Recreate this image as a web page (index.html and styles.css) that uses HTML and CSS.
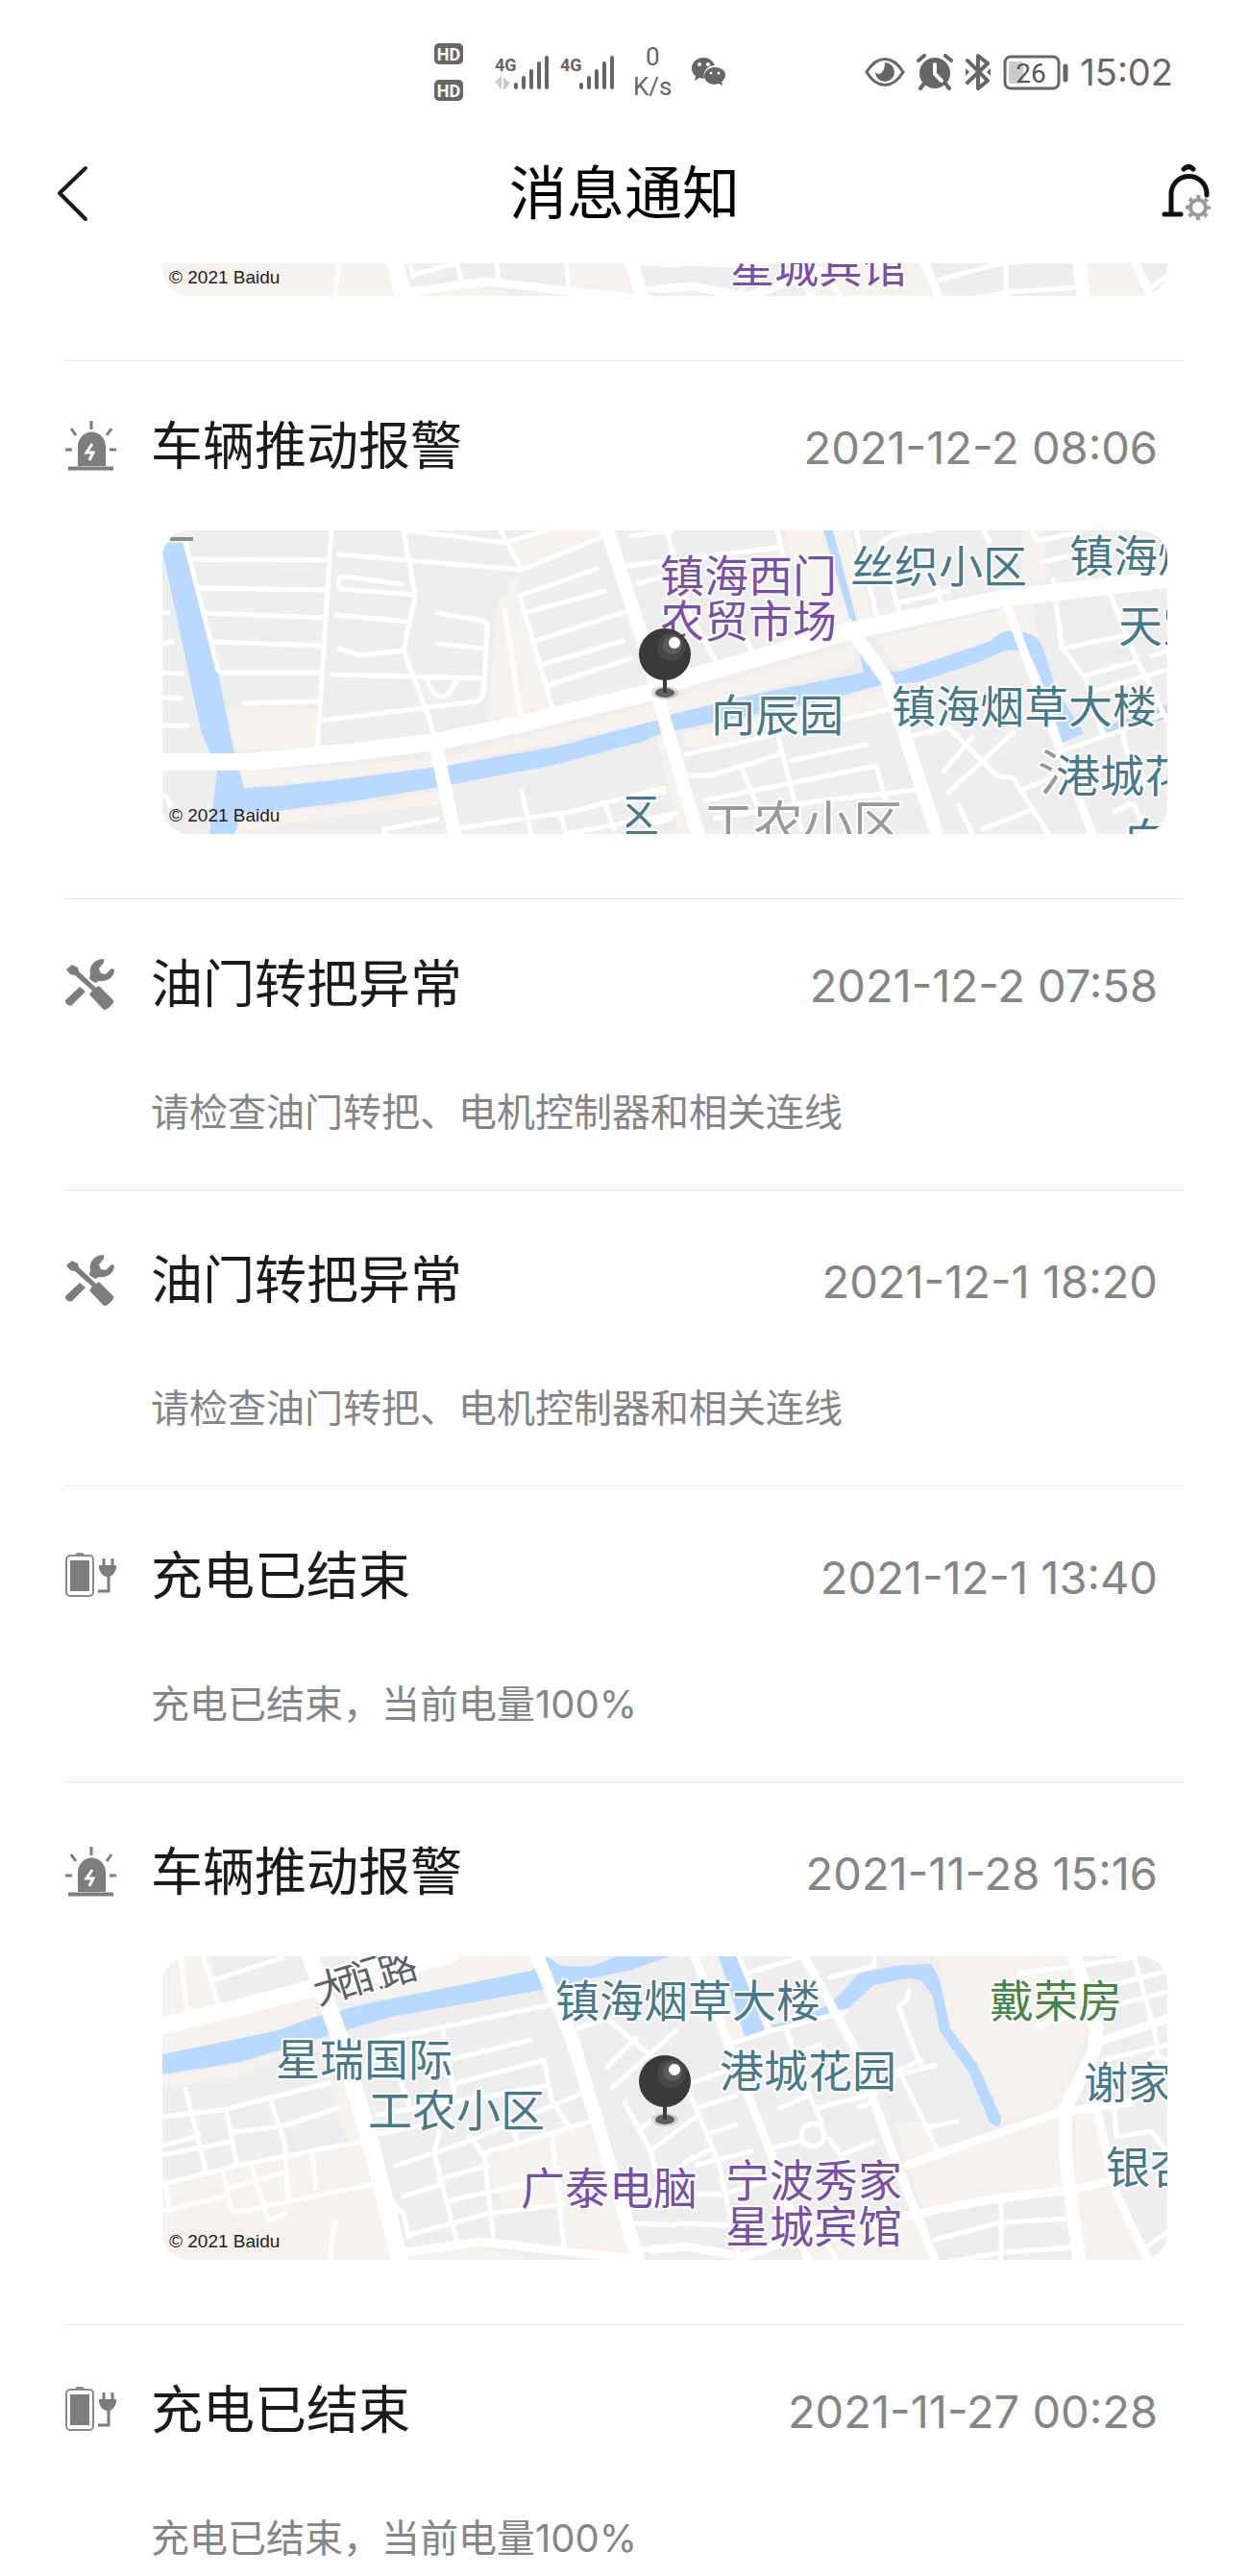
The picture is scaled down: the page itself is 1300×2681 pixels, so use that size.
FILE: index.html
```html
<!DOCTYPE html>
<html lang="zh-CN">
<head>
    <meta charset="UTF-8">
    <meta name="viewport" content="width=device-width, initial-scale=1.0">
    <title>消息通知</title>
    <link rel="stylesheet" href="styles.css">
</head>
<body>

    <!-- Shared icons and map drawings -->
    <svg class="defs" width="0" height="0" aria-hidden="true">
        <symbol id="icon-siren" viewBox="0 0 54 54">
            <path d="M14 47V27a14 15 0 0 1 29 0v20z" fill="#7d7d7d"/>
            <path d="M4 49.500h47" stroke="#7d7d7d" stroke-width="4"/>
            <path d="M28 0v9M7 8l5 7M49 8l-5 7M1 30h7M47 30h7" stroke="#7d7d7d" stroke-width="3"/>
            <path d="M29 24l-6 9h7l-4 8" fill="none" stroke="#fff" stroke-width="3"/>
        </symbol>
        <symbol id="icon-tools" viewBox="0 0 54 54">
            <g fill="#7d7d7d">
                <path d="M2 11l6-5 6 3 1 4 18 17 3-2 15 15c2 3-7 11-10 10L26 37l3-4L11 17l-5-1z"/>
                <path d="M41 0c-9 0-16 7-14 16l-1 5 6 4 4-2c9 1 16-4 16-12l-3-1-6 6-5-1-2-5 5-6z"/>
                <path d="M16 29l6 5L8 48c-3 2-8-2-7-5z"/>
            </g>
        </symbol>
        <symbol id="icon-charge" viewBox="0 0 54 54">
            <rect x="2" y="5" width="28" height="42" rx="4" fill="none" stroke="#8a8a8a" stroke-width="2"/>
            <path d="M11 4l2-2h6l2 2z" fill="#8a8a8a"/>
            <path d="M6 10h20v32H6z" fill="#7d7d7d"/>
            <path d="M36 15h18v3c-1 5-5 9-8 9h-2c-3 0-7-4-8-9z" fill="#7d7d7d"/>
            <path d="M41 8v8M50 8v8M46 25v17H35" fill="none" stroke="#7d7d7d" stroke-width="3"/>
        </symbol>
        <symbol id="icon-signal" viewBox="0 0 56 36">
            <path d="M22 34v-3M30 34V24M38 34V17M46 34V9M54 34V3" stroke="#666" stroke-width="4" stroke-linecap="round" fill="none"/>
        </symbol>
        <symbol id="icon-hd" viewBox="0 0 32 24">
            <rect x="1" y="1" width="30" height="22" rx="5" fill="#666"/>
            <text class="badge-text" x="16" y="19" text-anchor="middle">HD</text>
        </symbol>

        <symbol id="pin" viewBox="0 0 60 80">
            <ellipse cx="30" cy="70" rx="10" ry="5" fill="#444" opacity=".8"/>
            <ellipse cx="30" cy="70" rx="14" ry="7" fill="#444" opacity=".2"/>
            <path d="M30 50v20" stroke="#3c3c3c" stroke-width="4"/>
            <circle cx="30" cy="30" r="27" fill="#3a3a3a"/>
            <circle cx="37" cy="22" r="15" fill="#474747"/>
            <circle cx="38" cy="20" r="10" fill="#5c5c5c"/>
            <circle cx="40" cy="18" r="6" fill="#fff"/>
        </symbol>

        <symbol id="map-north" viewBox="0 0 1046 316">
            <path class="land" d="M0 0h1046v316H0z"/>
            <path class="open" d="M67 185h93v43H75zM75 250l125-5 100-10 213-55 207-62v22L513 198l-218 47-210 23zM360 11l32-11h68l-4 11-82 29zM349 75l21-30 2 23 34 117-68 13zM463 0h10l30 128-12-6zM647 0h68l25 95-40 10-30-30zM745 112l137-31 8 31-97 33-32-4zM895 0h20l10 50-30 5zM80 297l144-14 78-14 2 14-180 22-48 11zM515 215l12-2 40 103h-30zM885 80l20-4 27 130 12 16-12 2z"/>
            <path class="open" d="M540 211l164-33 50-12 4 16-210 46z"/>
            <path class="water" d="M0 21l3-8h20l35 135 16 80 11 40 39-2 71-8 100-13 115-20 103-27 19-7 86-21 112-22-12-55-3-2-27-91h10l25 95 3 20 15 26q16 10 32 4l89-30q14-14 25-9 22-2 29 15l14 44 29 46-22 10-17-53-15-35q-10-10-28-8l-29 13-61 20-39 3-64 17-164 33-21 9-95 25-122 23-78 13-93 12H83l-8 23H49l8-65-17-43z"/>
            <path class="water" d="M979 205l67-24v15l-61 16z"/>
            <g class="road">
                <path d="M24 13l34 133 5 2h100M176 0l-15 230M31 30l139 1M38 60l132 2M45 86l123 5M52 116l113 4M85 180l76-2"/>
                <path d="M251 0l12 68-12 57 23 60 11 36M254 0l102 13L400 0M352 0l22 41 86-35M183 25l191 16M249 56l-59-8q-7 0-7 8 0 4 3 5l77 6M181 88l75 7M184 123l22 7 45-5M177 150l158 4M165 198l162-20q8-2 8-20l3-58q0-5-6-6l-46-8M286 118l49 5M276 155q4 18 14 18 10 0 16-18"/>
                <path d="M356 83l18 115M452 40l-80 28 34 117M377 86l84-23M388 115l93-30M395 140l84-25M402 161l86-28"/>
                <path d="M0 86h6M0 118l10-2M0 148l20 1M0 174l19 1M0 203h26M0 275q9 3 8 18"/>
                <path d="M231 316v-5l55-10M309 310l115-17 98-25M374 271l10 45M415 298l5 18M461 285l9 26M420 316l113-21"/>
                <path d="M488 6l42-6M474 38L640 18M495 55l40-10M640 0l10 45M525 0l20 80 32 58M607 111l8 17M722 0l23 95"/>
                <path d="M545 233l212-47M654 240l78-17M640 211l25 100M547 255h25l71-22M565 281l178-36 11 40M575 300l105-18 106-12M604 250l14 35M511 275l12-3M511 305l18-5"/>
                <path d="M775 215l43-10 50 50 18 3 36 58M813 251l30-36M818 273l68-63M893 271l47-20M829 286l14 30M854 311l50-20"/>
                <path d="M768 88L747 15q10-15 53-15M768 75l50-12M807 61l4 17M855 0l6 12M904 0l7 11 39-8M915 33l32-7"/>
                <path d="M927 51l9 70 25 34 18 56M936 123l64-13M961 151l54-15M968 168l78-23M986 65l25 63 35 70M940 228l39-13 64-24M998 205l6 26 20 30M991 293l16-8M1011 285l14 31M1030 130l16-4"/>
            </g>
            <g class="road road-wide">
                <path d="M285 225l19 91M463 0l42 128 12 50 40 138M725 115l29 40 52 161"/>
            </g>
            <path class="road road-mid" d="M879 78l53 143 36 95"/>
            <path class="road road-main" d="M0 241h88l107-10 90-11 89-19 136-33 22-10 179-52 161-35 174-20"/>
            <path d="M8 9h24" stroke="#8d8d88" stroke-width="4"/>
            <g class="label label-shop">
                <text x="518" y="64">镇海西门</text>
                <text x="518" y="111">农贸市场</text>
            </g>
            <g class="label label-grey">
                <text x="563" y="325">工农小区</text>
                <text x="911" y="271">氵</text>
            </g>
            <g class="label">
                <text x="716" y="54">丝织小区</text>
                <text x="944" y="43">镇海炼</text>
                <text x="995" y="116">天宝</text>
                <text x="571" y="209">向辰园</text>
                <text x="759" y="200">镇海烟草大楼</text>
                <text x="930" y="272">港城花</text>
                <text x="1002" y="338">向</text>
            </g>
            <svg x="483" y="270" width="40" height="46"><text class="label" x="-12" y="43">区</text></svg>
            <use href="#pin" x="493" y="99" width="60" height="80"/>
        </symbol>

        <symbol id="map-south" viewBox="0 0 1046 316">
            <path class="land" d="M0 0h1046v316H0z"/>
            <path class="open" d="M0 0h50l10 50-60 13zM0 80l160-40v23l-43 15L0 102zM0 237l210-45 28 124H0zM195 0h190l3 15-188 35zM331 208l110-36 39 86 15 54-75-10-3-44-61 4zM250 312l80-10 50 14H250zM0 125l81-13 60-18-60 30-81 14zM175 130l20-6 22 70-24 4z"/>
            <path class="open" d="M800 0h147l21 58-32 100-64 14-52-97-11-67zM775 215l95-35 63-15 10 77-75 8-78 12zM763 175l27-5 17 32-32 10zM950 160h22l14 75-38 7zM950 245l40-3 32 74h-65zM668 316l8-26 54-10 56-8 17 44zM560 0l18 2 28 83-12 5z"/>
            <path class="land" d="M30 150l140-25 18 66L0 232v-72z"/>
            <path class="water" d="M0 102l117-24 43-15 50-13 174-35 17-15 11 9q20 3 35 1l27-10h53l-37 14-30 6-65 15-157 28-50 15-107 32L0 123zM579 0h20l28 78-20 7zM634 72l45-14 18-10 28-30 36-8 39-2 9 17 11 50 28 37 25 56q0 9-5 9l-7-4-21-51-31-44-7-36-12-17-15-2-35 7-25 23-79 24z"/>
            <g class="road">
                <path d="M19 0l7 57M42 0l16 48M52 25l72-23M227 87l179-37M302 107l81-20M292 78l12 64M306 132l91-24 9 44 21 30M224 165l175-30M224 185l76-15M248 132l10 25"/>
                <path d="M242 218l78-26 118-50M335 205l110-33M288 182l-5 23 23 90M320 188l15 20 10 87M288 232l50-14M251 250l37-12M295 255l79-17 40-18M256 290l82-22 79-10M406 188l12 114M238 255l13 13 5 24M365 180l6 15"/>
                <path d="M0 167l63-7 111-28M24 138l21 84M67 162l10 53M113 152l14 40 4 60M74 183l50-6 59-19M0 197l38-10M0 207l72-14M0 237l77-19 129-25M63 225l9 38q1 4 6 3l139-28M0 265l65-15M3 238l5 24M93 218l17 57 17-7M67 242l60-17M156 205l4 37M179 277l-5 39"/>
                <path d="M463 115l30-30M468 137l67-60M432 75l31-10 47 40M481 152l27 50 5 23M508 202l48-35M493 278l40 2M490 306l30-2M497 180l14-10"/>
                <path d="M547 138l32 77 21 97M550 132l40-14M556 158l41-13M568 185l29-10M543 215l25-13M557 217l56-14M511 247l71 1 54-16M534 278l59 2"/>
                <path d="M600 0l32 78-46 15M607 18l61-18M695 22l46-12V0M636 77l75-19M650 78l8 24 14 40 14 30M694 190l13 18 8 20M632 200l34-8M682 158l61-16M643 158l29-13M707 207l33-14M725 157l16-5M658 102l27-10"/>
                <circle cx="677" cy="186" r="12"/>
                <path d="M777 35l-2 10-9 8 24 62h14M761 122l7-4 22-10M761 125l43-12M768 122l39 80M797 178l30-6"/>
                <path d="M890 25l3-7 114-16M1011 0l21 75 4 27M960 38l86-23M965 58l81-21M911 72l49-14M979 108l67-16M990 152l3 36 36-6 14 18M1046 108q-10-6-16-2"/>
                <path d="M804 295l68-18 75-4M820 318l55-10 75-5M873 252v63M1025 302l21-14M690 296l12 20"/>
            </g>
            <g class="road road-mid">
                <path d="M554 0l34 88 44 114 40 114M668 0l54 98 39 110 43 108M972 158l21 90 32 66M1046 65l-74 25M775 217l157-54 75-11M740 276l35-6 93-18 79-9 46-10M252 308l79-11 96 11 70 8M511 305l36-3 57 11 78-28"/>
            </g>
            <g class="road road-wide">
                <path d="M390 0l37 88 68 227M950 0l22 75-2 23-30 60v50l14 108"/>
            </g>
            <path class="road road-main" d="M0 72l74-17 86-23 80-18 60-16M154 0l27 75 36 120 30 121"/>
            <g class="label label-road">
                <text transform="translate(162 51) rotate(-17)">大</text>
                <text transform="translate(185 44) rotate(-17)">西</text>
                <text transform="translate(201 39) rotate(-17)">门</text>
                <text transform="translate(230 33) rotate(-17)">路</text>
            </g>
            <g class="label">
                <text x="409" y="63">镇海烟草大楼</text>
                <text x="118" y="124">星瑞国际</text>
                <text x="214" y="177">工农小区</text>
                <text x="580" y="136">港城花园</text>
                <text x="959" y="148">谢家</text>
                <text x="982" y="236">银杏</text>
            </g>
            <g class="label label-shop">
                <text x="373" y="258">广泰电脑</text>
                <text x="586" y="250">宁波秀家</text>
                <text x="586" y="298">星城宾馆</text>
            </g>
            <text class="label label-park" x="861" y="63">戴荣房</text>
            <use href="#pin" x="493" y="100" width="60" height="80"/>
        </symbol>
    </svg>

    <!-- Phone status bar -->
    <div class="status-bar">
        <div class="status-group">
            <div class="hd-stack">
                <svg width="32" height="24"><use href="#icon-hd"/></svg>
                <svg width="32" height="24"><use href="#icon-hd"/></svg>
            </div>
            <div class="signals">
                <svg width="56" height="36" viewBox="0 0 56 36">
                    <use href="#icon-signal"/>
                    <text class="net-text" x="0" y="17">4G</text>
                    <path d="M1 29l5-5v11M10 24v11l5-6" fill="#ccc" stroke="#ccc" stroke-width="2"/>
                </svg>
                <svg width="56" height="36" viewBox="0 0 56 36">
                    <use href="#icon-signal"/>
                    <text class="net-text" x="0" y="17">4G</text>
                </svg>
            </div>
            <div class="net-speed"><span>0</span><span>K/s</span></div>
            <svg width="36" height="32" viewBox="0 0 36 32">
                <path d="M13 1C6 1 1 6 1 12c0 4 2 7 4 8l-1 5 5-3 5 1c-2-8 4-14 11-14C23 4 19 1 13 1z" fill="#666"/>
                <path d="M25 11c-6 0-11 4-11 9s5 9 11 9l4-1 4 2-1-4c2-1 4-4 4-7 0-5-5-8-11-8z" fill="#666"/>
                <g fill="#fff"><circle cx="9" cy="8" r="2"/><circle cx="18" cy="8" r="2"/><circle cx="21" cy="17" r="1.500"/><circle cx="29" cy="17" r="1.500"/></g>
            </svg>
        </div>
        <div class="status-group status-right">
            <svg width="42" height="32" viewBox="0 0 42 32">
                <path d="M2 16C13-2 29-2 40 16 29 34 13 34 2 16z" fill="none" stroke="#666" stroke-width="3"/>
                <path d="M21 6a10 10 0 1 1-10 10q1 2 4 2 6-2 6-12z" fill="#666"/>
            </svg>
            <svg width="38" height="38" viewBox="0 0 38 38">
                <circle cx="19" cy="20" r="16" fill="#666"/>
                <path d="M2 7l6-5M36 7l-6-5M7 32l-3 4M31 32l3 4" stroke="#666" stroke-width="4" stroke-linecap="round"/>
                <path d="M19 11v10l7 7" fill="none" stroke="#fff" stroke-width="4" stroke-linecap="round"/>
            </svg>
            <svg width="28" height="40" viewBox="0 0 28 40">
                <path d="M3 8l21 21-10 8V3l10 8L3 31" fill="none" stroke="#666" stroke-width="4" stroke-linejoin="round" stroke-linecap="round"/>
                <path d="M1 16v8l4-4zM27 16v8l-4-4z" fill="#666"/>
            </svg>
            <svg width="68" height="38" viewBox="0 0 68 38">
                <rect x="2" y="3" width="56" height="33" rx="6" fill="none" stroke="#666" stroke-width="3"/>
                <rect x="6" y="8" width="15" height="23" rx="2" fill="#ccc"/>
                <path d="M65 13v14" stroke="#666" stroke-width="5" stroke-linecap="round"/>
                <text class="battery-text" x="29" y="30" text-anchor="middle">26</text>
            </svg>
            <span class="clock">15:02</span>
        </div>
    </div>

    <header class="app-bar">
        <button type="button" class="icon-button back-button" aria-label="返回">
            <svg width="34" height="60" viewBox="0 0 34 60"><path d="M31 4L4 30l27 27" fill="none" stroke="#1a1a1a" stroke-width="4" stroke-linecap="round" stroke-linejoin="round"/></svg>
        </button>
        <h1>消息通知</h1>
        <button type="button" class="icon-button" aria-label="通知设置">
            <svg width="54" height="60" viewBox="0 0 54 60">
                <g fill="none" stroke="#111" stroke-width="5" stroke-linecap="round">
                    <path d="M24 5q5-5 10 0M11 51V32a18 18 0 0 1 37-2v2M4 52h17"/>
                </g>
                <g fill="none" stroke="#999">
                    <circle cx="39" cy="45" r="8" stroke-width="4"/>
                    <circle cx="39" cy="45" r="11" stroke-width="4" stroke-dasharray="4 4.640" stroke-dashoffset="2"/>
                </g>
            </svg>
        </button>
    </header>

    <main>
        <ul class="messages">
            <li class="message message-map message-cut">
                <svg class="map" viewBox="0 282 1046 34" role="img" aria-label="地图">
                    <path class="open" d="M0 282h20v34H0z"/>
                    <use href="#map-south" x="5" y="4" width="1046" height="316"/>
                    <text class="copyright" x="7" y="303">© 2021 Baidu</text>
                </svg>
            </li>

            <li class="message message-map">
                <div class="message-head">
                    <svg class="message-icon"><use href="#icon-siren"/></svg>
                    <h2>车辆推动报警</h2>
                    <time>2021-12-2 08:06</time>
                </div>
                <svg class="map" viewBox="0 0 1046 316" role="img" aria-label="地图">
                    <use href="#map-north" width="1046" height="316"/>
                    <text class="copyright" x="7" y="303">© 2021 Baidu</text>
                </svg>
            </li>

            <li class="message">
                <div class="message-head">
                    <svg class="message-icon"><use href="#icon-tools"/></svg>
                    <h2>油门转把异常</h2>
                    <time>2021-12-2 07:58</time>
                </div>
                <p>请检查油门转把、电机控制器和相关连线</p>
            </li>

            <li class="message">
                <div class="message-head">
                    <svg class="message-icon"><use href="#icon-tools"/></svg>
                    <h2>油门转把异常</h2>
                    <time>2021-12-1 18:20</time>
                </div>
                <p>请检查油门转把、电机控制器和相关连线</p>
            </li>

            <li class="message">
                <div class="message-head">
                    <svg class="message-icon"><use href="#icon-charge"/></svg>
                    <h2>充电已结束</h2>
                    <time>2021-12-1 13:40</time>
                </div>
                <p>充电已结束，当前电量100%</p>
            </li>

            <li class="message message-map">
                <div class="message-head">
                    <svg class="message-icon"><use href="#icon-siren"/></svg>
                    <h2>车辆推动报警</h2>
                    <time>2021-11-28 15:16</time>
                </div>
                <svg class="map" viewBox="0 0 1046 316" role="img" aria-label="地图">
                    <use href="#map-south" width="1046" height="316"/>
                    <text class="copyright" x="7" y="303">© 2021 Baidu</text>
                </svg>
            </li>

            <li class="message">
                <div class="message-head">
                    <svg class="message-icon"><use href="#icon-charge"/></svg>
                    <h2>充电已结束</h2>
                    <time>2021-11-27 00:28</time>
                </div>
                <p>充电已结束，当前电量100%</p>
            </li>
        </ul>
    </main>

</body>
</html>
```
FILE: styles.css
```css
* {
    box-sizing: border-box;
}

body {
    margin: 0;
    background-color: #fefefe;
    color: #1a1a1a;
    font-family: Inter, "Noto Sans CJK SC", sans-serif;
}

svg {
    display: block;
}

.defs {
    position: absolute;
}

/* Status bar */
.status-bar {
    display: flex;
    justify-content: space-between;
    align-items: center;
    height: 150px;
    padding: 0 79px 0 451px;
    color: #666;
}

.status-group {
    display: flex;
    align-items: center;
    gap: 20px;
}

.status-right {
    gap: 12px;
}

.hd-stack {
    display: flex;
    flex-direction: column;
    gap: 14px;
    margin-right: 12px;
}

.signals {
    display: flex;
    gap: 12px;
}

.net-speed {
    display: flex;
    flex-direction: column;
    align-items: center;
    font-family: Roboto, sans-serif;
    font-size: 26px;
    font-weight: 400;
    line-height: 31px;
}

.badge-text {
    font: bold 18px Roboto, sans-serif;
    fill: #fff;
}

.net-text {
    font: bold 18px Roboto, sans-serif;
    fill: #666;
}

.battery-text {
    font: 400 28px Roboto, sans-serif;
    fill: #555;
}

.clock {
    font-size: 38px;
    font-weight: 400;
}

/* Title bar */
.app-bar {
    display: flex;
    justify-content: space-between;
    align-items: center;
    height: 102px;
    padding: 0 38px;
}

.app-bar h1 {
    margin: 0;
    font-size: 60px;
    font-weight: 400;
    line-height: 80px;
    color: #000;
}

.icon-button {
    display: flex;
    width: 54px;
    padding: 0;
    border: none;
    background: none;
    cursor: pointer;
}

.back-button {
    justify-content: flex-end;
}

/* Message list */
.messages {
    list-style: none;
    margin: 22px 68px 0 67px;
    padding: 0;
}

.message {
    padding: 59px 0 50px;
    border-bottom: 1px solid #e6e6e6;
}

.message-map {
    padding-bottom: 67px;
}

.message-map + .message {
    padding-top: 54px;
}

.message-cut {
    padding-top: 0;
}

.message:last-child {
    padding-bottom: 8px;
    border-bottom: none;
}

.message-head {
    display: flex;
    align-items: center;
    height: 70px;
    padding-right: 27px;
}

.message-icon {
    width: 54px;
    height: 54px;
    margin-right: 36px;
}

.message h2 {
    flex: 1;
    margin: 0;
    font-size: 54px;
    font-weight: 400;
    line-height: 70px;
}

.message time {
    font-size: 47px;
    font-weight: 400;
    color: #858585;
}

.message p {
    margin: 68px 0 0 90px;
    font-size: 40px;
    font-weight: 400;
    line-height: 60px;
    color: #858585;
}

/* Maps */
.map {
    width: calc(100% - 119px);
    margin: 52px 17px 0 102px;
    border-radius: 28px;
    overflow: hidden;
}

.message-cut .map {
    margin-top: 0;
    border-radius: 0 0 28px 28px;
}

.land {
    fill: #eee;
}

.open {
    fill: #f6f3ee;
}

.water {
    fill: #b9d9ff;
}

.road {
    fill: none;
    stroke: #fff;
    stroke-width: 5px;
    stroke-linecap: round;
    stroke-linejoin: round;
}

.road-mid {
    stroke-width: 9px;
}

.road-wide {
    stroke-width: 14px;
}

.road-main {
    stroke-width: 18px;
}

.label {
    font-family: "Noto Sans CJK SC", sans-serif;
    font-size: 46px;
    fill: #47798a;
    stroke: #fff;
    stroke-width: 4px;
    stroke-linejoin: round;
    paint-order: stroke;
}

.label-shop {
    fill: #7a4fa8;
}

.label-park {
    fill: #4a8548;
}

.label-grey {
    font-size: 52px;
    fill: #999;
}

.label-road {
    font-size: 40px;
    fill: #5c6166;
}

.copyright {
    font-family: "Liberation Sans", sans-serif;
    font-size: 19px;
    fill: #222;
}
```
